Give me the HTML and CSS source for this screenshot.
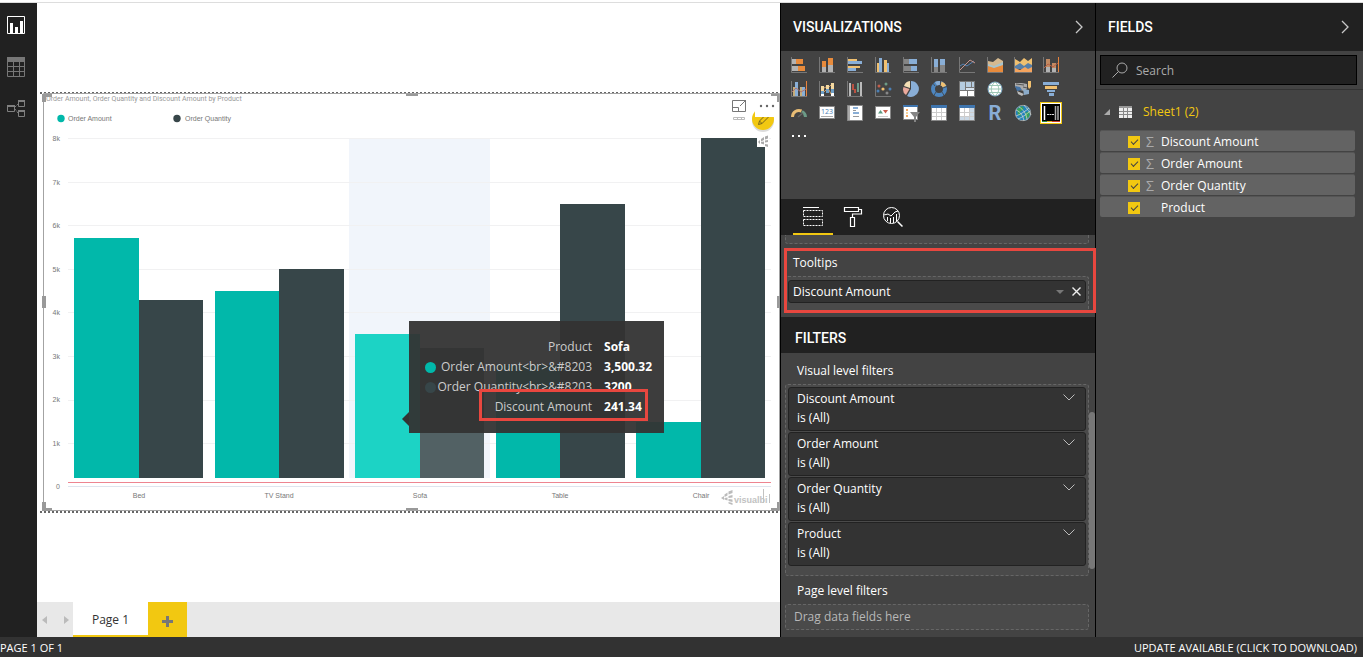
FILE: index.html
```html
<!DOCTYPE html>
<html lang="en">
<head>
<meta charset="utf-8">
<title>Report</title>
<link rel="stylesheet" href="styles.css">
</head>
<body>
<div class="app">
  <div class="workspace">
    <nav class="rail" aria-label="Views">
      <button class="rail-btn active" aria-label="Report"><svg width="20" height="20" viewBox="0 0 20 20"><path d="M1.500 1.500h17v17h-17z" fill="none" stroke="#fff"/><path d="M4 8h3v10H4zM9 12h3v6H9zM14 6h3v12h-3z" fill="#fff"/></svg></button>
      <button class="rail-btn" aria-label="Data"><svg width="20" height="20" viewBox="0 0 20 20"><path d="M1 0h18v5H1z" fill="#777"/><path d="M1.500 .5h17v19h-17zM1 9.500h18M1 14.500h18M7.500 4v15M13.500 4v15" fill="none" stroke="#777"/></svg></button>
      <button class="rail-btn" aria-label="Relationships"><svg width="20" height="20" viewBox="0 0 20 20"><g fill="none" stroke="#808080"><path d="M1.500 6.500h7v6h-7zM12.500 1.500h6v6h-6zM12.500 11.500h6v6h-6z"/><path d="M9 8l3-3M9 10l3 4" stroke-dasharray="2 1"/></g><path d="M1 6h8v2H1zM12 1h7v2h-7zM12 11h7v2h-7z" fill="#808080"/></svg></button>
    </nav>

    <main class="report">
      <div class="canvas">
        <div class="visual">
          <svg class="chart" viewBox="37 92 743 421" role="img" aria-label="Order Amount, Order Quantity and Discount Amount by Product">
            <defs><clipPath id="edit-clip"><path d="M745 105h10v12h25v20h-35z"/></clipPath></defs>
            <path d="M349 138h141v340H349z" fill="#f1f5fb"/>
            <path d="M68 138.500h703M68 182.500h703M68 225.500h703M68 269.500h703M68 312.500h703M68 356.500h703M68 400.500h703M68 443.500h703" stroke="#f1f1f2"/>
            <path d="M68 486.500h703" stroke="#dfe4ee"/>
            <path d="M68 482.500h703" stroke="#ee8490"/>
            <g fill="#01b8aa"><path d="M74 238h65v240H74zM215 291h64v187h-64zM496 365h64v113h-64zM636 422h65v56h-65z"/></g>
            <path d="M355 334h65v144h-65z" fill="#1cd3c5"/>
            <g fill="#374649"><path d="M139 300h64v178h-64zM279 269h65v209h-65zM560 204h65v274h-65zM701 138h64v340h-64z"/></g>
            <path d="M420 348h64v130h-64z" fill="#526164"/>
            <g class="frame">
              <path d="M40 93h740M40 512h740" stroke="#666" stroke-width="2" stroke-dasharray="2 2"/>
              <path d="M43.500 93.500h736v417h-736z" fill="none" stroke="#a3a3a3"/>
              <path d="M42 94h10v3h-6v5h-4zM779 94h-8v2h6v6h2zM42 511h10v-3h-6v-6h-4zM779 511h-8v-3h6v-6h2zM406 94h12v2h-12zM406 508h12v2h-12zM42 296h4v12h-4zM777 296h3v12h-3z" fill="#999"/>
            </g>
            <text x="46" y="101" class="chart-title">Order Amount, Order Quantity and Discount Amount by Product</text>
            <circle cx="61" cy="118.500" r="3.700" fill="#01b8aa"/><circle cx="177" cy="118.500" r="3.700" fill="#374649"/>
            <g class="axis"><text x="68" y="121">Order Amount</text><text x="185" y="121">Order Quantity</text></g>
            <g class="axis end"><text x="60" y="141">8k</text><text x="60" y="185">7k</text><text x="60" y="228">6k</text><text x="60" y="272">5k</text><text x="60" y="315">4k</text><text x="60" y="359">3k</text><text x="60" y="402">2k</text><text x="60" y="446">1k</text><text x="60" y="489">0</text></g>
            <g class="axis mid"><text x="139" y="498">Bed</text><text x="279" y="498">TV Stand</text><text x="420" y="498">Sofa</text><text x="560" y="498">Table</text><text x="701" y="498">Chair</text></g>
            <g fill="#bbb"><path d="M721 498l3-2v4zM724.500 494.500l3-2v3l-3 1.500zM724.500 498l3-.5v3l-3-1zM728.500 491.500l4-1.500v3l-4 1.500zM728.500 496l4-1v2.500l-4 .5zM728.500 499l4 .5v2.500l-4-1zM728.500 502l4 1v2l-4-1.500z"/></g>
            <text x="734" y="503" class="mark">visualbi</text>
            <path d="M763.500 489v14M769.500 494v9" stroke="#c2c2c2"/>
            <path d="M757 135h12v12h-12z" fill="#fff"/>
            <path d="M758 142l2-2v4zM761 139l3-2v3l-3 1.500zM761 142l3-.5v3l-3-1zM765 136.500l3-1v3l-3 1zM765 140.500l3-.5v2l-3 .5zM765 144l3 .5v2.500l-3-1z" fill="#aaa"/>
            <g fill="none" stroke="#777"><path d="M732.500 100.500h13v11h-13zM732.500 107.500h6v4M740 106l6-6M742.500 100.500h3v3"/></g>
            <path d="M733.500 117.500h11v2h-11zM737.500 117v3M741.500 117v3" fill="none" stroke="#bbb"/>
            <g clip-path="url(#edit-clip)">
              <circle cx="763" cy="121" r="11" fill="#ccc" opacity=".7"/>
              <circle cx="763" cy="119" r="11" fill="#f2c811"/>
              <path d="M758.500 124.500l1-3.500 7-7 2.500 2.500-7 7zM759.500 121l2.500 2.500" fill="none" stroke="#77651b"/>
            </g>
            <g fill="#666"><circle cx="761" cy="106" r="1.200"/><circle cx="767" cy="106" r="1.200"/><circle cx="773" cy="106" r="1.200"/></g>
          </svg>
          <div class="tip">
            <table>
              <tr><td></td><th scope="row">Product</th><td class="val">Sofa</td></tr>
              <tr><td><i class="dot teal"></i></td><th scope="row">Order Amount&lt;br&gt;&amp;#8203</th><td class="val">3,500.32</td></tr>
              <tr><td><i class="dot slate"></i></td><th scope="row">Order Quantity&lt;br&gt;&amp;#8203</th><td class="val">3200</td></tr>
              <tr><td></td><th scope="row">Discount Amount</th><td class="val">241.34</td></tr>
            </table>
          </div>
        </div>
      </div>
      <div class="pages">
        <button class="page-nav" aria-label="Previous page"><svg width="5" height="8"><path d="M5 0v8L0 4z" fill="#bbb"/></svg></button>
        <button class="page-nav end-nav" aria-label="Next page"><svg width="5" height="8"><path d="M0 0v8l5-4z" fill="#bbb"/></svg></button>
        <button class="page-tab">Page 1</button>
        <button class="page-add" aria-label="Add page"><svg width="11" height="11"><path d="M4 0h3v4h4v3H7v4H4V7H0V4h4z" fill="#777"/></svg></button>
      </div>
    </main>

    <section class="panel viz">
      <header class="panel-head"><h2>VISUALIZATIONS</h2><button class="collapse" aria-label="Collapse visualizations"><svg width="8" height="14" viewBox="0 0 8 14"><path d="M1 1l6 6-6 6" fill="none" stroke="#c8c8c8" stroke-width="1.300"/></svg></button></header>
      <div class="gallery">
        <button aria-label="Stacked bar chart"><svg viewBox="0 0 18 18"><path d="M1.500 1v15.500H17" class="ax"/><path d="M2 3h4v5H2zM2 10h6v5H2z" fill="#b3b3b3"/><path d="M6 3h7v5H6zM8 10h7v5H8z" fill="#e88b3c"/></svg></button>
        <button aria-label="Stacked column chart"><svg viewBox="0 0 18 18"><path d="M1.500 1v15.500H17" class="ax"/><path d="M4 11h4v5H4zM10 9h5v7h-5z" fill="#b3b3b3"/><path d="M4 5h4v6H4zM10 2h5v7h-5z" fill="#e88b3c"/></svg></button>
        <button aria-label="Clustered bar chart"><svg viewBox="0 0 18 18"><path d="M1.500 1v15.500H17" class="ax"/><path d="M2 3h9v2H2zM2 10h12v2H2z" fill="#f0c070"/><path d="M2 5h14v3H2zM2 12h8v3H2z" fill="#89aed6"/></svg></button>
        <button aria-label="Clustered column chart"><svg viewBox="0 0 18 18"><path d="M1.500 1v15.500H17" class="ax"/><path d="M3 7h2v9H3zM10 4h3v12h-3z" fill="#f0c070"/><path d="M5 2h3v14H5zM13 7h2v9h-2z" fill="#89aed6"/></svg></button>
        <button aria-label="100% stacked bar chart"><svg viewBox="0 0 18 18"><path d="M1.500 1v15.500H17" class="ax"/><path d="M2 3h5v5H2zM2 10h7v5H2z" fill="#858585"/><path d="M7 3h8v5H7zM9 10h6v5H9z" fill="#89aed6"/></svg></button>
        <button aria-label="100% stacked column chart"><svg viewBox="0 0 18 18"><path d="M1.500 1v15.500H17" class="ax"/><path d="M4 11h4v5H4zM10 9h5v7h-5z" fill="#858585"/><path d="M4 3h4v8H4zM10 3h5v6h-5z" fill="#89aed6"/></svg></button>
        <button aria-label="Line chart"><svg viewBox="0 0 18 18"><path d="M1.500 1v15.500H17" class="ax"/><path d="M2 10l3-2 4 2 7-5" fill="none" stroke="#5583b5"/><path d="M2 14l8-8 2-2 5 3" fill="none" stroke="#c9958c"/></svg></button>
        <button aria-label="Area chart"><svg viewBox="0 0 18 18"><path d="M2 5l5 1 5-4 5 3v6H2z" fill="#d5b990"/><path d="M2 8l6 2 9-4v6H2z" fill="#a8c4cc"/><path d="M2 10l6 2 9-3v7H2z" fill="#e88b3c"/><path d="M1.500 1v15.500H17" class="ax"/></svg></button>
        <button aria-label="Stacked area chart"><svg viewBox="0 0 18 18"><path d="M1 3l5 3 4-4 4 3 4-3v9H1z" fill="#f0c070"/><path d="M1 10l5-3 4 3 4-3 4 2v4H1z" fill="#577fa8"/><path d="M1 12l5 2 5-3 3 2 4-2v5H1z" fill="#f5a45e"/><path d="M.5 1v15.500H18" class="ax"/></svg></button>
        <button aria-label="Line and stacked column chart"><svg viewBox="0 0 18 18"><path d="M1.500 1v15.500H17" class="ax"/><path d="M4 3h4v8H4zM10 7h4v5h-4z" fill="#c38a62"/><path d="M4 11h4v5H4zM10 12h4v4h-4z" fill="#b3b3b3"/><path d="M16.500 1v15" stroke="#e8823c"/><path d="M2 12l4-4 5 3 5-4" stroke="#b95f43" fill="none"/></svg></button>

        <button aria-label="Line and clustered column chart"><svg viewBox="0 0 18 18"><path d="M1.500 1v15.500H17" class="ax"/><path d="M3 7h2v9H3zM10 7h2v9h-2z" fill="#c5ad7b"/><path d="M5 2h3v14H5zM12 7h3v9h-3z" fill="#89aed6"/><path d="M16.500 1v15" stroke="#e8823c"/><path d="M2 12l4-4 5 4 5-3" stroke="#b4736c" fill="none"/></svg></button>
        <button aria-label="Ribbon chart"><svg viewBox="0 0 18 18"><path d="M3 6h3v5H3zM8 5h3v4H8zM13 3h3v6h-3z" fill="#f5d9a0"/><path d="M3 11h3v3H3zM8 9h3v4H8zM13 9h3v4h-3z" fill="#6d9fc8"/><path d="M3 14h3v3H3zM13 13h3v4h-3z" fill="#fff"/><path d="M6 8l2-1M6 12l2-2M11 7l2-2M11 10l2 4" stroke="#d09c64"/><path d="M1.500 1v15.500H17" class="ax"/></svg></button>
        <button aria-label="Waterfall chart"><svg viewBox="0 0 18 18"><path d="M1.500 1v15.500H17" class="ax"/><path d="M3 3h2v13H3zM14 2h2v14h-2z" fill="#bbb"/><path d="M6 4h2v6H6zM8 9h2v4H8z" fill="#ba5141"/><path d="M11 3h2v9h-2z" fill="#6d9c8b"/></svg></button>
        <button aria-label="Scatter chart"><svg viewBox="0 0 18 18"><path d="M1.500 1v15.500H17" class="ax"/><g fill="#c45d4a"><circle cx="5" cy="6" r="1.500"/></g><g fill="#6c9b87"><circle cx="12" cy="4" r="1.500"/></g><g fill="#f0c070"><circle cx="9" cy="9" r="1.600"/></g><g fill="#4b7fb5"><circle cx="4" cy="11" r="1.500"/><circle cx="16" cy="9" r="1.500"/></g><g fill="#888"><circle cx="13" cy="13" r="1.500"/></g></svg></button>
        <button aria-label="Pie chart"><svg viewBox="0 0 18 18"><path d="M9 1a8 8 0 1 1-4 15L9 9z" fill="#89aed6"/><path d="M8 1v7L2 6a7 7 0 0 1 6-5z" fill="#f5dfb4"/><path d="M1.500 7l6 2-3.500 6a7 7 0 0 1-2.500-8z" fill="#eaa99c"/></svg></button>
        <button aria-label="Donut chart"><svg viewBox="0 0 18 18" fill="none" stroke-width="4"><circle cx="9" cy="9" r="6" stroke="#4d86c0"/><path d="M6 3.800A6 6 0 0 1 10 3" stroke="#89aed6"/><path d="M11 3.300a6 6 0 0 1 3.500 3.200" stroke="#f0c070"/><path d="M10.500 0v5M13 8l5-2M5 6L2 2M6 12l-3 5M12 12l3 5" stroke="#434343" stroke-width=".8"/></svg></button>
        <button aria-label="Treemap"><svg viewBox="0 0 18 18"><path d="M1 1h16v16H1z" fill="#777"/><path d="M2 2h5v8H2zM8 2h5v5H8zM14 2h2v5h-2z" fill="#b5cce0"/><path d="M8 8h8v2H8z" fill="#d7e3ef"/><path d="M2 11h7v5H2zM10 11h6v5h-6z" fill="#fff"/></svg></button>
        <button aria-label="Map"><svg viewBox="0 0 18 18"><circle cx="9" cy="9" r="7" fill="#fff" stroke="#7ba7c9"/><path d="M2 9h14M3 5.500h12M3 12.500h12M9 2c-5 4-5 10 0 14M9 2c5 4 5 10 0 14" fill="none" stroke="#9cc6b5"/></svg></button>
        <button aria-label="Filled map"><svg viewBox="0 0 18 18"><path d="M1 3h7l5 1v5l-3 2-4-1-5-3z" fill="#aaa"/><path d="M1 6l5 1 2 3-5 1z" fill="#4674a6"/><path d="M14 1h3v6l-2 2-1-2z" fill="#f0c070"/><path d="M3 11l7 3-2 2-4-2z" fill="#bbb"/><path d="M9 9l6 1v4l-5 1z" fill="#8babc9"/><path d="M2 4l8 1M9 7l4 1" stroke="#555"/></svg></button>
        <button aria-label="Funnel"><svg viewBox="0 0 18 18"><path d="M1 2h16v3H1zM5 10h8v2H5z" fill="#89aed6"/><path d="M3 6h12v3H3z" fill="#f0c070"/><path d="M7 13h5v3H7z" fill="#89aed6"/></svg></button>

        <button aria-label="Gauge"><svg viewBox="0 0 18 18" fill="none" stroke-width="3"><path d="M2.500 13a6.500 6.500 0 0 1 9-6" stroke="#e9bd75"/><path d="M12 7.500a6.500 6.500 0 0 1 3.500 5.500" stroke="#6c9b87"/><path d="M8 13l5-4" stroke="#666" stroke-width="1.500"/></svg></button>
        <button aria-label="Card"><svg viewBox="0 0 18 18"><path d="M1.500 2.500h15v12h-15z" fill="#fff" stroke="#888"/><path d="M3 12.500h12" stroke="#aaa"/><text x="9" y="10" text-anchor="middle" class="digits">123</text></svg></button>
        <button aria-label="Multi-row card"><svg viewBox="0 0 18 18"><path d="M1.500 1.500h15v15h-15z" fill="#fff" stroke="#888"/><path d="M3 2v14" stroke="#aaa" stroke-width="2"/><path d="M7 3h5v2H7zM7 8h6v2H7z" fill="#89aed6"/><path d="M7 6.500h3M7 12.500h6" stroke="#999"/></svg></button>
        <button aria-label="KPI"><svg viewBox="0 0 18 18"><path d="M1.500 2.500h15v12h-15z" fill="#fff" stroke="#888"/><path d="M4 9.500L6.500 6 9 9.500z" fill="#5d9b82"/><path d="M9 6h5l-2.500 3.500z" fill="#c95c4b"/><path d="M4 12.500h10" stroke="#ccc"/></svg></button>
        <button aria-label="Slicer"><svg viewBox="0 0 18 18"><path d="M1.500 1.500h14v14h-14z" fill="#fff" stroke="#888"/><path d="M1 1h15v2H1z" fill="#3f75ae"/><path d="M4 5h2v2H4zM4 11h2v2H4z" fill="#f5a860"/><path d="M4 8h2v2H4z" fill="#f5d6a0"/><path d="M8 8h10l-4 5v5h-2v-5z" fill="#858585"/></svg></button>
        <button aria-label="Table"><svg viewBox="0 0 18 18"><path d="M1.500 1.500h15v15h-15z" fill="#fff" stroke="#888"/><path d="M1 1h16v3H1z" fill="#3f75ae"/><path d="M2 8.500h14M2 12.500h14M6.500 4v12M11.500 4v12" stroke="#ccc"/></svg></button>
        <button aria-label="Matrix"><svg viewBox="0 0 18 18"><path d="M1.500 1.500h15v15h-15z" fill="#fff" stroke="#888"/><path d="M1 1h16v3H1z" fill="#3f75ae"/><path d="M12 4h4v12h-4zM2 12h14v4H2z" fill="#cbd9e6"/><path d="M2 8.500h14M2 12.500h14M6.500 4v12M11.500 4v12" stroke="#ccc"/></svg></button>
        <button class="letter" aria-label="R script visual">R</button>
        <button aria-label="ArcGIS map"><svg viewBox="0 0 18 18"><circle cx="9" cy="9" r="8" fill="#2182bd"/><path d="M3 5l5-3 2 3-4 3 1 4-3-1zM11 9l5-2-1 6-4 2z" fill="#38a15b"/><circle cx="9" cy="9" r="7.700" fill="none" stroke="#999"/><path d="M2 12C7 10 12 7 15 4M4 15c5-2 9-5 12-8M5 3c4 2 8 8 8 13M2 6c5 2 7 6 8 11M10 1c3 4 6 7 7 10" fill="none" stroke="#ccd4cf" stroke-width=".8"/></svg></button>
        <button class="picked" aria-label="Custom visual"><svg viewBox="0 0 22 22"><path d="M0 0h22v22H0z" fill="#f2c811"/><path d="M1 1h20v20H1z" fill="#fff"/><path d="M2 2h18v18H2z" fill="#000"/><path d="M4.500 4v14" stroke="#fff" stroke-width="1.500"/><path d="M15.500 4v14M18 4v14" stroke="#aaa" stroke-width="1.500"/><path d="M7 12.500h7" stroke="#ddd" stroke-dasharray="2 .5"/><path d="M2 19.500h5" stroke="#2b8b3d"/><path d="M7 19.500h5" stroke="#e3b421"/><path d="M12 19.500h8" stroke="#cc3928"/></svg></button>
        <button aria-label="More visuals"><svg viewBox="0 0 18 18"><path d="M2 7h2v2H2zM8 7h2v2H8zM14 7h2v2h-2z" fill="#fff"/></svg></button>
      </div>

      <div class="tabs">
        <button class="tab on" aria-label="Fields"><svg width="22" height="22" viewBox="0 0 22 22"><path d="M1 1.500h16" stroke="#fff"/><path d="M1.500 4.500h19v6h-19zM1.500 13.500h19v6h-19z" fill="none" stroke="#fff" stroke-dasharray="2 1"/></svg></button>
        <button class="tab" aria-label="Format"><svg width="22" height="22" viewBox="0 0 22 22"><path d="M2.500 1.500h14v4h-14zM16.500 3.500h3v4.500h-9v3M8.500 11.500h4v9h-4z" fill="none" stroke="#fff" stroke-width="1.200"/></svg></button>
        <button class="tab" aria-label="Analytics"><svg width="22" height="22" viewBox="0 0 22 22"><g fill="none" stroke="#fff"><circle cx="9.500" cy="9.500" r="8"/><path d="M15.500 15.500l5 5" stroke-width="1.500"/><path d="M2 9l4-1 3 2 4-4 3-1M5.500 11v4M8.500 12v5M11.500 11v6M14.500 8v7"/></g></svg></button>
      </div>

      <div class="wells">
        <div class="drop cut"></div>
        <div class="well">
          <h3>Tooltips</h3>
          <div class="drop open">
            <div class="pill"><span>Discount Amount</span><button aria-label="Field options"><svg width="8" height="4"><path d="M0 0h8L4 4z" fill="#777"/></svg></button><button aria-label="Remove field"><svg width="9" height="9" viewBox="0 0 9 9"><path d="M.5 .5l8 8M8.500 .5l-8 8" stroke="#eee" stroke-width="1.400"/></svg></button></div>
          </div>
        </div>
      </div>

      <header class="sub-head"><h2>FILTERS</h2></header>
      <div class="filters">
        <h3>Visual level filters</h3>
        <div class="drop list">
          <button class="card"><span>Discount Amount</span><span>is (All)</span><svg class="chev" width="12" height="7"><path d="M.5 .5L6 6l5.500-5.500" fill="none" stroke="#bbb"/></svg></button>
          <button class="card"><span>Order Amount</span><span>is (All)</span><svg class="chev" width="12" height="7"><path d="M.5 .5L6 6l5.500-5.500" fill="none" stroke="#bbb"/></svg></button>
          <button class="card"><span>Order Quantity</span><span>is (All)</span><svg class="chev" width="12" height="7"><path d="M.5 .5L6 6l5.500-5.500" fill="none" stroke="#bbb"/></svg></button>
          <button class="card"><span>Product</span><span>is (All)</span><svg class="chev" width="12" height="7"><path d="M.5 .5L6 6l5.500-5.500" fill="none" stroke="#bbb"/></svg></button>
        </div>
        <h3 class="page-level">Page level filters</h3>
        <div class="drop hint">Drag data fields here</div>
        <div class="thumb"></div>
      </div>
    </section>

    <section class="panel fields">
      <header class="panel-head"><h2>FIELDS</h2><button class="collapse" aria-label="Collapse fields"><svg width="8" height="14" viewBox="0 0 8 14"><path d="M1 1l6 6-6 6" fill="none" stroke="#c8c8c8" stroke-width="1.300"/></svg></button></header>
      <div class="search-wrap">
        <label class="search"><svg width="16" height="16" viewBox="0 0 16 16"><circle cx="10" cy="6" r="5" fill="none" stroke="#aaa"/><path d="M6.500 9.500l-6 6" stroke="#aaa"/></svg><input type="text" placeholder="Search" aria-label="Search"></label>
      </div>
      <div class="tree">
        <button class="sheet"><svg width="6" height="6"><path d="M6 0v6H0z" fill="#aaa"/></svg><svg width="13" height="12"><path d="M0 0h13v12H0z" fill="#eee"/><path d="M0 0h13v2H0z" fill="#999"/><path d="M0 5.500h13M0 8.500h13M4.500 2v10M8.500 2v10" stroke="#888"/></svg><span>Sheet1 (2)</span></button>
        <label class="field"><input type="checkbox" checked><span class="sigma">Σ</span><span>Discount Amount</span></label>
        <label class="field"><input type="checkbox" checked><span class="sigma">Σ</span><span>Order Amount</span></label>
        <label class="field"><input type="checkbox" checked><span class="sigma">Σ</span><span>Order Quantity</span></label>
        <label class="field"><input type="checkbox" checked><span class="sigma"></span><span>Product</span></label>
      </div>
    </section>
  </div>
  <footer class="status"><span>PAGE 1 OF 1</span><a href="#">UPDATE AVAILABLE (CLICK TO DOWNLOAD)</a></footer>
</div>
</body>
</html>
```
FILE: styles.css
```css
* { box-sizing: border-box; }
body { margin: 0; font: 12px/18px "Open Sans", "Noto Sans", sans-serif; color: #fff; background: #fff; }
button { margin: 0; padding: 0; border: 0; background: none; color: inherit; font: inherit; text-align: left; }
h2, h3 { margin: 0; font-weight: 400; }
h3 { font-size: 12px; }
svg { display: block; }

.app { display: flex; flex-direction: column; min-height: 100vh; padding-top: 2px; }
.workspace { display: flex; flex: 1; border-top: 1px solid #ddd; }

.rail { display: flex; flex-direction: column; align-items: center; gap: 22px; width: 37px; padding: 12px 5px 0 0; background: #212121; }

.report { display: flex; flex: 1; flex-direction: column; min-width: 0; }
.canvas { display: flex; flex: 1; align-items: center; background: #fff; }
.visual { position: relative; width: 100%; }
.chart { width: 100%; }
.chart-title { font: 7px Roboto, sans-serif; fill: #999; }
.axis { font: 7px "Liberation Sans", sans-serif; fill: #777; }
.end { text-anchor: end; }
.mid { text-anchor: middle; }
.mark { font: 700 9px "Liberation Sans", sans-serif; fill: #c2c2c2; }

.tip { position: absolute; left: 50%; top: 54.4%; padding: 16px 12px 16px 16px; background: rgba(51, 51, 51, .95); color: #ccc; }
.tip::before { content: ""; position: absolute; right: 100%; bottom: 7px; border: 7px solid transparent; border-left-width: 0; border-right-color: #333; }
.tip::after { content: ""; position: absolute; right: 16px; bottom: 12px; width: 163px; height: 26px; border: 3px solid #e8473f; }
.tip table { border-collapse: collapse; }
.tip tr { height: 20px; }
.tip td, .tip th { padding: 0; font-weight: 400; white-space: nowrap; }
.tip th { padding: 0 12px 0 2px; text-align: right; }
.tip .val { color: #fff; font-weight: 700; }
.dot { display: block; width: 11px; height: 11px; border-radius: 50%; }
.teal { background: #01b8aa; }
.slate { background: #374649; }

.pages { display: flex; height: 35px; background: #e8e8e8; }
.page-nav { display: flex; align-items: center; width: 18px; padding-left: 5px; }
.end-nav { justify-content: flex-end; padding-right: 4px; }
.page-tab { width: 75px; padding-top: 2px; border-bottom: 2px solid #f2c811; background: #fff; color: #333; text-align: center; }
.page-add { display: flex; align-items: center; justify-content: center; width: 39px; padding-top: 4px; background: #f2c811; }

.panel { border-left: 1px solid #000; background: #434343; }
.viz { display: flex; flex-direction: column; width: 315px; }
.fields { width: 268px; }
.panel-head { display: flex; align-items: center; justify-content: space-between; height: 48px; padding: 0 12px; background: #212121; }
.fields .panel-head { padding-right: 14px; }
.panel-head h2, .sub-head h2 { font: 500 14px/20px Roboto, sans-serif; }

.gallery { display: grid; grid-template-columns: repeat(10, 18px); grid-auto-rows: 18px; gap: 6px 10px; height: 148px; padding: 5px 9px; }
.gallery svg { width: 18px; height: 18px; }
.gallery .ax { fill: none; stroke: #777; }
.gallery .letter { color: #89aed6; font: 700 20px/18px Roboto, sans-serif; text-align: center; }
.gallery .picked svg { width: 22px; height: 22px; margin: -2px; }
.digits { font: 7px "Open Sans", sans-serif; fill: #4b7fb5; }

.tabs { display: flex; height: 36px; padding-left: 12px; background: #212121; }
.tab { display: flex; justify-content: center; width: 40px; padding-top: 7px; }
.tab.on { border-bottom: 2px solid #f2c811; }

.drop { margin: 0 6px 0 4px; border: 1px dashed #666; border-radius: 3px; background: #4a4a4a; }
.wells { height: 82px; }
.cut { height: 9px; border-top: 0; border-radius: 0 0 3px 3px; }
.well { position: relative; height: 65px; margin-top: 4px; padding-top: 6px; }
.well::after { content: ""; position: absolute; inset: 0 -1px 0 3px; border: 3px solid #e8473f; }
.well h3 { padding-left: 12px; }
.open { height: 36px; margin-top: 4px; padding: 3px 2px; border-bottom: 0; }
.pill { display: flex; align-items: center; gap: 8px; height: 23px; padding: 0 4px; border: 1px solid #222; border-radius: 3px; background: #333; }
.pill span { flex: 1; }

.sub-head { height: 36px; padding: 11px 14px; background: #212121; }
.filters { position: relative; flex: 1; }
.filters h3 { padding: 9px 16px 4px; }
.list { display: flex; flex-direction: column; gap: 1px; padding: 2px 2px 9px; }
.card { position: relative; display: flex; flex-direction: column; gap: 1px; height: 44px; padding: 2px 8px; border: 1px solid #222; border-radius: 3px; background: #333; }
.chev { position: absolute; right: 10px; top: 6px; }
.filters .page-level { padding-top: 6px; }
.hint { height: 26px; padding: 3px 8px; color: #b8b8b8; }
.thumb { position: absolute; right: 0; top: 59px; width: 6px; height: 157px; border-radius: 3px; background: #777; }

.search-wrap { padding: 4px 6px 4px 4px; border-bottom: 1px solid #333; }
.search { display: flex; align-items: center; gap: 8px; height: 30px; padding-left: 11px; border: 1px solid #000; background: #212121; }
.search input { flex: 1; min-width: 0; padding: 2px 0 0; border: 0; outline: 0; background: none; color: #fff; font: inherit; }
.search input::placeholder { color: #aaa; opacity: 1; }
.tree { display: flex; flex-direction: column; gap: 1px; padding: 13px 8px 0 4px; }
.sheet { display: flex; align-items: center; height: 18px; margin-bottom: 8px; padding-left: 4px; color: #f2c811; }
.sheet svg + svg { margin: 0 11px 0 9px; }
.field { display: flex; align-items: center; height: 21px; padding: 1px 0 0 28px; border-top: 1px solid #555; border-radius: 2px; background: #636363; }
.field input { position: relative; width: 12px; height: 12px; margin: 0 6px 0 0; appearance: none; background: #f2c811; }
.field input::after { content: ""; position: absolute; left: 3px; top: 3px; width: 6px; height: 3px; border: solid #444; border-width: 0 0 1px 1px; transform: rotate(-45deg); }
.sigma { width: 15px; color: #aaa; font-size: 14px; }

.status { display: flex; justify-content: space-between; height: 20px; padding-right: 6px; background: #323232; font-size: 11px; line-height: 22px; }
.status a { color: inherit; text-decoration: none; }
```
